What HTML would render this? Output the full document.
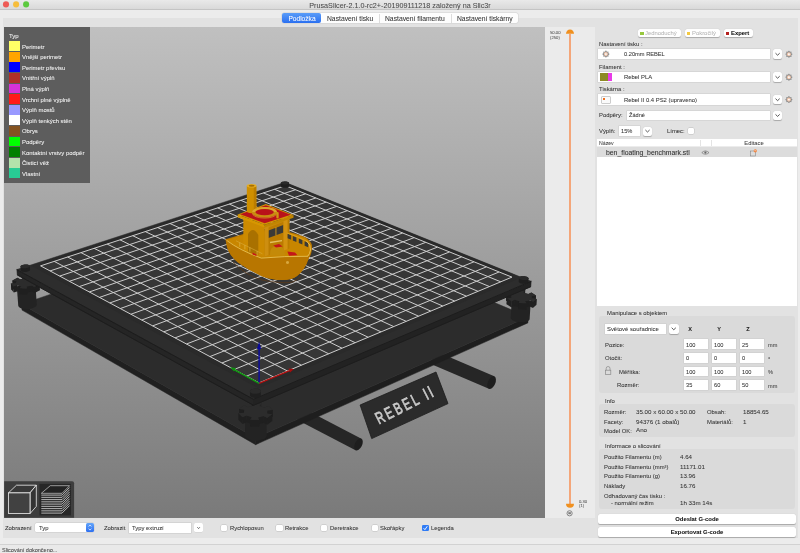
<!DOCTYPE html><html><head><meta charset="utf-8"><style>
html,body{margin:0;padding:0}
body{width:800px;height:553px;overflow:hidden;position:relative;background:#ececec;font-family:"Liberation Sans",sans-serif}
.t{position:absolute;line-height:1;white-space:nowrap;will-change:transform;-webkit-text-stroke:0.05px currentColor}
</style></head><body>
<div style="position:absolute;left:0.00px;top:0.00px;width:800.00px;height:9.10px;background:linear-gradient(#e9e9e9,#d9d9d9);border-bottom:0.5px solid #c4c4c4"></div>
<svg style="position:absolute;left:0;top:0" width="800" height="20"><circle cx="6.0" cy="4.4" r="3.05" fill="#ee5b55"/><circle cx="16.1" cy="4.4" r="3.05" fill="#f6bd3b"/><circle cx="26.1" cy="4.4" r="3.05" fill="#5cc93f"/></svg>
<div class="t" style="left:300.00px;width:200px;text-align:center;top:2.27px;font-size:7.2px;color:#4a4a4a;font-weight:normal;">PrusaSlicer-2.1.0-rc2+-201909111218 založený na Slic3r</div>
<div style="position:absolute;left:2.70px;top:18.40px;width:795.00px;height:520.10px;background:#e2e2e2"></div>
<div style="position:absolute;left:282.20px;top:13.30px;width:236.30px;height:9.90px;background:#fdfdfd;border-radius:2px;box-shadow:0 0 0 0.5px #cfcfcf"></div>
<div style="position:absolute;left:282.20px;top:13.30px;width:39.00px;height:9.90px;background:linear-gradient(#5a9cf8,#2a6ff0);border-radius:2px"></div>
<div style="position:absolute;left:379.00px;top:13.80px;width:0.50px;height:9.00px;background:#dcdcdc"></div>
<div style="position:absolute;left:451.00px;top:13.80px;width:0.50px;height:9.00px;background:#dcdcdc"></div>
<div class="t" style="left:202.30px;width:200px;text-align:center;top:15.90px;font-size:6.6px;color:#ffffff;font-weight:normal;">Podložka</div>
<div class="t" style="left:327.20px;top:15.82px;font-size:6.75px;color:#333;font-weight:normal;">Nastavení tisku</div>
<div class="t" style="left:385.00px;top:15.82px;font-size:6.75px;color:#333;font-weight:normal;">Nastavení filamentu</div>
<div class="t" style="left:457.00px;top:15.82px;font-size:6.75px;color:#333;font-weight:normal;">Nastavení tiskárny</div>
<div style="position:absolute;left:4.2px;top:27px;width:540.8px;height:491px;overflow:hidden;will-change:transform;background:linear-gradient(#c0c0c0,#7a7a7a)"><svg style="position:absolute;left:-4.2px;top:-27px" width="800" height="553" viewBox="0 0 800 553"><polygon points="430.32,363.75 488.92,388.85 494.28,376.35 435.68,351.25" fill="#262626"/>
<ellipse cx="491.60" cy="382.60" rx="3.74" ry="6.80" transform="rotate(23.2 491.60 382.60)" fill="#1e1e1e"/>
<polygon points="297.04,419.68 355.54,450.18 361.46,438.82 302.96,408.32" fill="#262626"/>
<ellipse cx="358.50" cy="444.50" rx="3.52" ry="6.40" transform="rotate(27.5 358.50 444.50)" fill="#1e1e1e"/>
<polygon points="255.62,444.67 22.02,310.11 21.57,304.18 255.54,437.96" fill="#202020" stroke="#202020" stroke-width="0.5" stroke-linejoin="round"/>
<polygon points="255.62,444.67 527.86,322.89 528.25,316.86 255.54,437.96" fill="#1e1e1e" stroke="#1e1e1e" stroke-width="0.5" stroke-linejoin="round"/>
<polygon points="255.54,437.96 528.25,316.86 285.07,214.28 21.57,304.18" fill="#2c2c2c" stroke="#2c2c2c" stroke-width="0.5" stroke-linejoin="round"/>
<polygon points="287.91,191.16 287.94,202.82 287.81,203.10 287.48,203.36 286.98,203.58 286.35,203.74 285.63,203.83 284.86,203.85 284.10,203.80 283.41,203.67 282.82,203.49 282.39,203.25 282.13,202.98 282.07,202.69 282.02,191.04 282.16,190.76 282.49,190.51 282.99,190.29 283.62,190.13 284.35,190.04 285.11,190.02 285.87,190.07 286.56,190.20 287.15,190.38 287.59,190.61 287.85,190.88" fill="#242424"/>
<polygon points="287.15,190.38 286.56,190.20 285.87,190.07 285.11,190.02 284.35,190.04 283.62,190.13 282.99,190.29 282.49,190.51 282.16,190.76 282.02,191.04 282.08,191.32 282.34,191.59 282.78,191.82 283.37,192.01 284.06,192.13 284.82,192.18 285.59,192.16 286.32,192.07 286.95,191.91 287.45,191.69 287.78,191.44 287.91,191.16 287.85,190.88 287.59,190.61" fill="#2a2a2a"/>
<polygon points="293.23,204.30 293.25,218.59 292.87,219.39 291.96,220.13 290.58,220.75 288.82,221.22 286.79,221.49 284.65,221.55 282.53,221.40 280.59,221.04 278.96,220.50 277.75,219.82 277.03,219.05 276.87,218.23 276.79,203.95 277.18,203.16 278.11,202.44 279.50,201.83 281.26,201.38 283.28,201.12 285.41,201.06 287.51,201.21 289.45,201.56 291.09,202.08 292.32,202.74 293.05,203.50" fill="#232323"/>
<polygon points="291.09,202.08 289.45,201.56 287.51,201.21 285.41,201.06 283.28,201.12 281.26,201.38 279.50,201.83 278.11,202.44 277.18,203.16 276.79,203.95 276.96,204.75 277.67,205.51 278.89,206.18 280.53,206.71 282.48,207.06 284.60,207.21 286.76,207.15 288.79,206.88 290.56,206.43 291.94,205.81 292.86,205.09 293.23,204.30 293.05,203.50 292.32,202.74" fill="#2b2b2b"/>
<polygon points="289.03,200.13 282.24,199.99 282.22,194.55 289.02,194.69" fill="#262626" />
<polygon points="282.24,199.99 283.10,201.48 283.08,196.03 282.22,194.55" fill="#1f1f1f" />
<polygon points="287.78,201.58 289.03,200.13 289.02,194.69 287.77,196.13" fill="#262626" />
<polygon points="278.91,202.27 276.18,201.13 276.15,195.68 278.89,196.82" fill="#262626" />
<polygon points="283.10,201.48 278.91,202.27 278.89,196.82 283.08,196.03" fill="#262626" />
<polygon points="294.76,201.52 291.74,202.54 291.73,197.09 294.76,196.07" fill="#262626" />
<polygon points="291.74,202.54 287.78,201.58 287.77,196.13 291.73,197.09" fill="#262626" />
<polygon points="276.18,201.13 272.45,203.26 272.41,197.80 276.15,195.68" fill="#262626" />
<polygon points="297.92,203.80 294.76,201.52 294.76,196.07 297.92,198.33" fill="#262626" />
<polygon points="272.45,203.26 276.35,203.74 276.32,198.28 272.41,197.80" fill="#1f1f1f" />
<polygon points="293.91,204.11 297.92,203.80 297.92,198.33 293.90,198.64" fill="#1f1f1f" />
<polygon points="276.35,203.74 276.10,205.50 276.07,200.03 276.32,198.28" fill="#1f1f1f" />
<polygon points="293.70,205.87 293.91,204.11 293.90,198.64 293.70,200.40" fill="#262626" />
<polygon points="276.10,205.50 272.06,205.81 272.03,200.34 276.07,200.03" fill="#262626" />
<polygon points="297.63,206.36 293.70,205.87 293.70,200.40 297.64,200.88" fill="#262626" />
<polygon points="272.06,205.81 275.16,208.12 275.13,202.63 272.03,200.34" fill="#1f1f1f" />
<polygon points="293.94,208.52 297.63,206.36 297.64,200.88 293.94,203.03" fill="#1f1f1f" />
<polygon points="278.24,207.08 282.21,208.06 282.19,202.57 278.21,201.60" fill="#1f1f1f" />
<polygon points="275.16,208.12 278.24,207.08 278.21,201.60 275.13,202.63" fill="#1f1f1f" />
<polygon points="286.94,208.16 291.15,207.36 291.15,201.87 286.93,202.67" fill="#1f1f1f" />
<polygon points="291.15,207.36 293.94,208.52 293.94,203.03 291.15,201.87" fill="#1f1f1f" />
<polygon points="282.21,208.06 280.94,209.54 280.92,204.04 282.19,202.57" fill="#1f1f1f" />
<polygon points="287.82,209.69 286.94,208.16 286.93,202.67 287.81,204.19" fill="#262626" />
<polygon points="280.94,209.54 287.82,209.69 287.81,204.19 280.92,204.04" fill="#1f1f1f" />
<polygon points="289.02,194.69 282.22,194.55 283.08,196.03 278.89,196.82 276.15,195.68 272.41,197.80 276.32,198.28 276.07,200.03 272.03,200.34 275.13,202.63 278.21,201.60 282.19,202.57 280.92,204.04 287.81,204.19 286.93,202.67 291.15,201.87 293.94,203.03 297.64,200.88 293.70,200.40 293.90,198.64 297.92,198.33 294.76,196.07 291.73,197.09 287.77,196.13" fill="#2c2c2c" />
<polygon points="22.96,288.18 22.00,275.37 22.05,275.02 22.33,274.67 22.81,274.34 23.46,274.07 24.24,273.87 25.10,273.76 25.96,273.73 26.79,273.80 27.52,273.95 28.09,274.19 28.48,274.48 28.66,274.82 29.60,287.62 29.55,287.98 29.27,288.34 28.79,288.67 28.14,288.94 27.36,289.15 26.51,289.27 25.64,289.29 24.82,289.22 24.09,289.06 23.52,288.83 23.13,288.53" fill="#242424"/>
<polygon points="28.09,274.19 27.52,273.95 26.79,273.80 25.96,273.73 25.10,273.76 24.24,273.87 23.46,274.07 22.81,274.34 22.33,274.67 22.05,275.02 22.00,275.37 22.17,275.71 22.56,276.01 23.13,276.24 23.86,276.40 24.69,276.47 25.56,276.44 26.42,276.32 27.20,276.12 27.85,275.85 28.33,275.53 28.61,275.18 28.66,274.82 28.48,274.48" fill="#2a2a2a"/>
<polygon points="18.29,305.89 16.95,288.39 17.11,287.37 17.89,286.38 19.24,285.47 21.06,284.71 23.23,284.14 25.61,283.81 28.02,283.74 30.32,283.93 32.34,284.37 33.95,285.03 35.05,285.86 35.54,286.82 36.79,304.29 36.66,305.32 35.91,306.34 34.58,307.27 32.77,308.06 30.60,308.64 28.21,308.98 25.78,309.06 23.48,308.86 21.45,308.41 19.84,307.73 18.77,306.87" fill="#232323"/>
<polygon points="33.95,285.03 32.34,284.37 30.32,283.93 28.02,283.74 25.61,283.81 23.23,284.14 21.06,284.71 19.24,285.47 17.89,286.38 17.11,287.37 16.95,288.39 17.43,289.35 18.51,290.20 20.12,290.87 22.15,291.31 24.47,291.51 26.91,291.43 29.31,291.09 31.49,290.52 33.31,289.75 34.65,288.83 35.41,287.83 35.54,286.82 35.05,285.86" fill="#2b2b2b"/>
<polygon points="32.82,282.46 25.27,282.27 24.83,276.30 32.39,276.48" fill="#262626" />
<polygon points="25.27,282.27 25.59,284.15 25.15,278.17 24.83,276.30" fill="#1f1f1f" />
<polygon points="30.81,284.28 32.82,282.46 32.39,276.48 30.37,278.30" fill="#262626" />
<polygon points="20.56,285.15 17.99,283.71 17.53,277.72 20.11,279.15" fill="#262626" />
<polygon points="25.59,284.15 20.56,285.15 20.11,279.15 25.15,278.17" fill="#262626" />
<polygon points="38.66,284.22 34.83,285.50 34.40,279.50 38.23,278.23" fill="#262626" />
<polygon points="34.83,285.50 30.81,284.28 30.37,278.30 34.40,279.50" fill="#262626" />
<polygon points="17.99,283.71 12.89,286.39 12.42,280.39 17.53,277.72" fill="#262626" />
<polygon points="41.23,287.09 38.66,284.22 38.23,278.23 40.80,281.09" fill="#262626" />
<polygon points="12.89,286.39 17.06,287.00 16.59,280.99 12.42,280.39" fill="#1f1f1f" />
<polygon points="36.59,287.48 41.23,287.09 40.80,281.09 36.16,281.47" fill="#1f1f1f" />
<polygon points="17.06,287.00 16.01,289.22 15.55,283.21 16.59,280.99" fill="#1f1f1f" />
<polygon points="35.60,289.71 36.59,287.48 36.16,281.47 35.17,283.69" fill="#262626" />
<polygon points="16.01,289.22 11.35,289.62 10.88,283.60 15.55,283.21" fill="#262626" />
<polygon points="39.81,290.33 35.60,289.71 35.17,283.69 39.38,284.30" fill="#262626" />
<polygon points="11.35,289.62 13.83,292.53 13.36,286.49 10.88,283.60" fill="#1f1f1f" />
<polygon points="34.74,293.06 39.81,290.33 39.38,284.30 34.31,287.01" fill="#1f1f1f" />
<polygon points="17.73,291.23 21.77,292.47 21.31,286.43 17.27,285.20" fill="#1f1f1f" />
<polygon points="13.83,292.53 17.73,291.23 17.27,285.20 13.36,286.49" fill="#1f1f1f" />
<polygon points="27.04,292.60 32.11,291.59 31.67,285.55 26.59,286.56" fill="#1f1f1f" />
<polygon points="32.11,291.59 34.74,293.06 34.31,287.01 31.67,285.55" fill="#1f1f1f" />
<polygon points="21.77,292.47 19.70,294.34 19.24,288.29 21.31,286.43" fill="#1f1f1f" />
<polygon points="27.37,294.53 27.04,292.60 26.59,286.56 26.92,288.48" fill="#262626" />
<polygon points="19.70,294.34 27.37,294.53 26.92,288.48 19.24,288.29" fill="#1f1f1f" />
<polygon points="32.39,276.48 24.83,276.30 25.15,278.17 20.11,279.15 17.53,277.72 12.42,280.39 16.59,280.99 15.55,283.21 10.88,283.60 13.36,286.49 17.27,285.20 21.31,286.43 19.24,288.29 26.92,288.48 26.59,286.56 31.67,285.55 34.31,287.01 39.38,284.30 35.17,283.69 36.16,281.47 40.80,281.09 38.23,278.23 34.40,279.50 30.37,278.30" fill="#2c2c2c" />
<polygon points="517.85,300.63 518.64,287.61 518.69,287.24 518.96,286.91 519.45,286.63 520.11,286.42 520.91,286.30 521.78,286.27 522.67,286.34 523.52,286.50 524.27,286.75 524.87,287.05 525.28,287.40 525.47,287.77 524.65,300.80 524.61,301.17 524.34,301.51 523.85,301.80 523.19,302.01 522.40,302.13 521.53,302.16 520.63,302.09 519.79,301.92 519.04,301.68 518.44,301.36 518.03,301.01" fill="#242424"/>
<polygon points="524.27,286.75 523.52,286.50 522.67,286.34 521.78,286.27 520.91,286.30 520.11,286.42 519.45,286.63 518.96,286.91 518.69,287.24 518.64,287.61 518.83,287.98 519.24,288.33 519.84,288.64 520.59,288.88 521.44,289.04 522.34,289.11 523.21,289.09 524.01,288.96 524.67,288.76 525.16,288.47 525.43,288.14 525.47,287.77 525.28,287.40 524.87,287.05" fill="#2a2a2a"/>
<polygon points="510.69,317.95 511.64,302.01 511.78,300.97 512.55,300.03 513.91,299.23 515.75,298.64 517.97,298.30 520.39,298.23 522.87,298.42 525.23,298.88 527.32,299.57 529.00,300.43 530.14,301.43 530.68,302.48 529.65,318.44 529.54,319.49 528.78,320.46 527.44,321.28 525.59,321.89 523.37,322.24 520.93,322.32 518.44,322.11 516.07,321.64 513.98,320.93 512.32,320.04 511.20,319.02" fill="#232323"/>
<polygon points="527.32,299.57 525.23,298.88 522.87,298.42 520.39,298.23 517.97,298.30 515.75,298.64 513.91,299.23 512.55,300.03 511.78,300.97 511.64,302.01 512.15,303.06 513.28,304.06 514.95,304.94 517.04,305.64 519.43,306.10 521.93,306.30 524.38,306.23 526.61,305.88 528.46,305.28 529.81,304.47 530.57,303.52 530.68,302.48 530.14,301.43 529.00,300.43" fill="#2b2b2b"/>
<polygon points="523.85,296.88 516.00,296.69 516.36,290.61 524.23,290.81" fill="#262626" />
<polygon points="516.00,296.69 517.58,298.64 517.95,292.56 516.36,290.61" fill="#1f1f1f" />
<polygon points="523.00,298.78 523.85,296.88 524.23,290.81 523.38,292.69" fill="#262626" />
<polygon points="513.09,299.67 509.49,298.17 509.85,292.09 513.45,293.58" fill="#262626" />
<polygon points="517.58,298.64 513.09,299.67 513.45,293.58 517.95,292.56" fill="#262626" />
<polygon points="531.00,298.71 527.93,300.04 528.32,293.95 531.39,292.62" fill="#262626" />
<polygon points="527.93,300.04 523.00,298.78 523.38,292.69 528.32,293.95" fill="#262626" />
<polygon points="509.49,298.17 506.05,300.96 506.41,294.86 509.85,292.09" fill="#262626" />
<polygon points="535.54,301.70 531.00,298.71 531.39,292.62 535.95,295.59" fill="#262626" />
<polygon points="506.05,300.96 510.73,301.60 511.09,295.49 506.41,294.86" fill="#1f1f1f" />
<polygon points="531.06,302.10 535.54,301.70 535.95,295.59 531.45,296.00" fill="#1f1f1f" />
<polygon points="510.73,301.60 511.14,303.91 511.50,297.79 511.09,295.49" fill="#1f1f1f" />
<polygon points="531.53,304.42 531.06,302.10 531.45,296.00 531.93,298.30" fill="#262626" />
<polygon points="511.14,303.91 506.63,304.32 506.98,298.20 511.50,297.79" fill="#262626" />
<polygon points="536.25,305.06 531.53,304.42 531.93,298.30 536.65,298.94" fill="#262626" />
<polygon points="506.63,304.32 511.11,307.35 511.47,301.22 506.98,298.20" fill="#1f1f1f" />
<polygon points="532.87,307.90 536.25,305.06 536.65,298.94 533.28,301.76" fill="#1f1f1f" />
<polygon points="514.23,306.00 519.19,307.28 519.57,301.15 514.60,299.87" fill="#1f1f1f" />
<polygon points="511.11,307.35 514.23,306.00 514.60,299.87 511.47,301.22" fill="#1f1f1f" />
<polygon points="524.68,307.42 529.20,306.37 529.59,300.24 525.07,301.28" fill="#1f1f1f" />
<polygon points="529.20,306.37 532.87,307.90 533.28,301.76 529.59,300.24" fill="#1f1f1f" />
<polygon points="519.19,307.28 518.32,309.23 518.70,303.08 519.57,301.15" fill="#1f1f1f" />
<polygon points="526.30,309.43 524.68,307.42 525.07,301.28 526.69,303.28" fill="#262626" />
<polygon points="518.32,309.23 526.30,309.43 526.69,303.28 518.70,303.08" fill="#1f1f1f" />
<polygon points="524.23,290.81 516.36,290.61 517.95,292.56 513.45,293.58 509.85,292.09 506.41,294.86 511.09,295.49 511.50,297.79 506.98,298.20 511.47,301.22 514.60,299.87 519.57,301.15 518.70,303.08 526.69,303.28 525.07,301.28 529.59,300.24 533.28,301.76 536.65,298.94 531.93,298.30 531.45,296.00 535.95,295.59 531.39,292.62 528.32,293.95 523.38,292.69" fill="#2c2c2c" />
<polygon points="259.38,401.47 259.53,415.95 259.34,416.43 258.89,416.88 258.23,417.26 257.38,417.54 256.43,417.70 255.42,417.73 254.43,417.64 253.52,417.42 252.76,417.09 252.20,416.68 251.88,416.21 251.81,415.72 251.63,401.25 251.83,400.77 252.28,400.33 252.94,399.96 253.79,399.68 254.74,399.52 255.75,399.49 256.75,399.58 257.65,399.80 258.42,400.12 258.98,400.52 259.31,400.98" fill="#242424"/>
<polygon points="258.42,400.12 257.65,399.80 256.75,399.58 255.75,399.49 254.74,399.52 253.79,399.68 252.94,399.96 252.28,400.33 251.83,400.77 251.63,401.25 251.69,401.74 252.02,402.20 252.58,402.61 253.34,402.93 254.25,403.14 255.25,403.24 256.26,403.20 257.22,403.04 258.07,402.77 258.74,402.40 259.18,401.95 259.38,401.47 259.31,400.98 258.98,400.52" fill="#2a2a2a"/>
<polygon points="266.50,417.85 266.65,435.55 266.12,436.94 264.88,438.22 263.03,439.29 260.69,440.09 258.01,440.55 255.19,440.65 252.42,440.38 249.89,439.76 247.77,438.82 246.21,437.64 245.32,436.30 245.15,434.89 244.89,417.20 245.46,415.84 246.72,414.60 248.58,413.55 250.92,412.78 253.59,412.34 256.39,412.24 259.15,412.50 261.67,413.10 263.79,414.01 265.37,415.15 266.29,416.46" fill="#232323"/>
<polygon points="263.79,414.01 261.67,413.10 259.15,412.50 256.39,412.24 253.59,412.34 250.92,412.78 248.58,413.55 246.72,414.60 245.46,415.84 244.89,417.20 245.06,418.59 245.96,419.91 247.52,421.07 249.65,421.99 252.19,422.61 254.98,422.88 257.82,422.78 260.51,422.32 262.86,421.53 264.72,420.48 265.96,419.22 266.50,417.85 266.29,416.46 265.37,415.15" fill="#2b2b2b"/>
<polygon points="261.24,410.32 252.33,410.05 252.25,403.32 261.17,403.58" fill="#262626" />
<polygon points="252.33,410.05 253.37,412.63 253.29,405.87 252.25,403.32" fill="#1f1f1f" />
<polygon points="259.52,412.81 261.24,410.32 261.17,403.58 259.45,406.05" fill="#262626" />
<polygon points="247.84,413.98 244.31,412.00 244.21,405.25 247.74,407.22" fill="#262626" />
<polygon points="253.37,412.63 247.84,413.98 247.74,407.22 253.29,405.87" fill="#262626" />
<polygon points="268.69,412.73 264.67,414.48 264.61,407.71 268.64,405.97" fill="#262626" />
<polygon points="264.67,414.48 259.52,412.81 259.45,406.05 264.61,407.71" fill="#262626" />
<polygon points="244.31,412.00 239.28,415.67 239.17,408.90 244.21,405.25" fill="#262626" />
<polygon points="272.73,416.66 268.69,412.73 268.64,405.97 272.68,409.89" fill="#262626" />
<polygon points="239.28,415.67 244.38,416.51 244.28,409.73 239.17,408.90" fill="#1f1f1f" />
<polygon points="267.44,417.19 272.73,416.66 272.68,409.89 267.38,410.41" fill="#1f1f1f" />
<polygon points="244.38,416.51 243.93,419.55 243.83,412.76 244.28,409.73" fill="#1f1f1f" />
<polygon points="267.07,420.25 267.44,417.19 267.38,410.41 267.01,413.45" fill="#262626" />
<polygon points="243.93,419.55 238.61,420.09 238.50,413.29 243.83,412.76" fill="#262626" />
<polygon points="272.22,421.10 267.07,420.25 267.01,413.45 272.18,414.29" fill="#262626" />
<polygon points="238.61,420.09 242.54,424.09 242.44,417.27 238.50,413.29" fill="#1f1f1f" />
<polygon points="267.26,424.84 272.22,421.10 272.18,414.29 267.20,418.01" fill="#1f1f1f" />
<polygon points="246.65,422.30 251.83,424.01 251.74,417.19 246.56,415.50" fill="#1f1f1f" />
<polygon points="242.54,424.09 246.65,422.30 246.56,415.50 242.44,417.27" fill="#1f1f1f" />
<polygon points="258.06,424.20 263.64,422.82 263.58,416.00 257.98,417.38" fill="#1f1f1f" />
<polygon points="263.64,422.82 267.26,424.84 267.20,418.01 263.58,416.00" fill="#1f1f1f" />
<polygon points="251.83,424.01 250.06,426.58 249.97,419.75 251.74,417.19" fill="#1f1f1f" />
<polygon points="259.13,426.85 258.06,424.20 257.98,417.38 259.06,420.02" fill="#262626" />
<polygon points="250.06,426.58 259.13,426.85 259.06,420.02 249.97,419.75" fill="#1f1f1f" />
<polygon points="261.17,403.58 252.25,403.32 253.29,405.87 247.74,407.22 244.21,405.25 239.17,408.90 244.28,409.73 243.83,412.76 238.50,413.29 242.44,417.27 246.56,415.50 251.74,417.19 249.97,419.75 259.06,420.02 257.98,417.38 263.58,416.00 267.20,418.01 272.18,414.29 267.01,413.45 267.38,410.41 272.68,409.89 268.64,405.97 264.61,407.71 259.45,406.05" fill="#2c2c2c" />
<polygon points="253.59,405.31 17.22,274.90 16.81,269.60 253.51,399.30" fill="#252525" stroke="#252525" stroke-width="0.5" stroke-linejoin="round"/>
<polygon points="253.59,405.31 530.85,286.66 531.20,281.27 253.51,399.30" fill="#222222" stroke="#222222" stroke-width="0.5" stroke-linejoin="round"/>
<polygon points="253.51,399.30 531.20,281.27 284.97,182.31 16.81,269.60" fill="#2d2d2d" stroke="#2d2d2d" stroke-width="0.5" stroke-linejoin="round"/>
<path d="M16.81,269.60 L253.51,399.30 L531.20,281.27" fill="none" stroke="#1b1b1b" stroke-width="0.9" stroke-linejoin="round"/>
<path d="M17.22,274.90 L253.59,405.31 L530.85,286.66" fill="none" stroke="#1d1d1d" stroke-width="1.0" stroke-linejoin="round"/>
<polygon points="258.41,388.22 521.53,277.52 285.90,182.80 31.33,265.78" fill="#2a2a2a" />
<polygon points="259.09,382.89 511.93,277.14 285.50,185.69 40.57,265.85" fill="#363636" />
<path d="M259.09,382.89L40.57,265.85M259.09,382.89L511.93,277.14M273.39,376.91L54.20,261.39M246.51,376.15L499.10,271.96M287.50,371.01L67.67,256.98M234.13,369.52L486.45,266.85M301.41,365.19L80.98,252.62M221.94,362.99L473.97,261.81M315.13,359.45L94.14,248.32M209.94,356.57L461.67,256.84M328.67,353.79L107.14,244.06M198.13,350.24L449.53,251.94M342.03,348.20L119.99,239.85M186.50,344.01L437.56,247.10M355.21,342.69L132.70,235.70M175.05,337.87L425.75,242.33M368.22,337.25L145.26,231.58M163.76,331.83L414.10,237.63M381.05,331.88L157.67,227.52M152.65,325.88L402.60,232.98M393.72,326.58L169.95,223.50M141.70,320.02L391.25,228.40M406.23,321.35L182.09,219.53M130.92,314.24L380.05,223.88M418.58,316.18L194.09,215.60M120.29,308.55L369.00,219.41M430.77,311.09L205.96,211.72M109.82,302.94L358.09,215.01M442.80,306.05L217.70,207.88M99.50,297.41L347.32,210.66M454.68,301.08L229.31,204.08M89.32,291.96L336.69,206.36M466.42,296.17L240.79,200.32M79.29,286.59L326.19,202.12M478.01,291.33L252.15,196.60M69.41,281.29L315.83,197.94M489.45,286.54L263.39,192.92M59.66,276.07L305.59,193.80M500.76,281.81L274.50,189.29M50.05,270.92L295.48,189.72M511.93,277.14L285.50,185.69M40.57,265.85L285.50,185.69" stroke="#cdcdcd" stroke-width="1.0" fill="none"/>
<polygon points="280.82,186.19 280.81,182.88 281.01,182.50 281.47,182.15 282.17,181.85 283.06,181.63 284.07,181.50 285.14,181.47 286.21,181.54 287.18,181.71 288.00,181.97 288.62,182.29 288.99,182.66 289.08,183.05 289.08,186.36 288.89,186.75 288.43,187.11 287.74,187.40 286.85,187.63 285.83,187.76 284.75,187.79 283.69,187.71 282.71,187.54 281.88,187.28 281.27,186.96 280.91,186.59" fill="#1f1f1f"/>
<polygon points="288.00,181.97 287.18,181.71 286.21,181.54 285.14,181.47 284.07,181.50 283.06,181.63 282.17,181.85 281.47,182.15 281.01,182.50 280.81,182.88 280.90,183.27 281.26,183.64 281.87,183.97 282.70,184.22 283.67,184.39 284.74,184.47 285.82,184.44 286.84,184.31 287.73,184.09 288.43,183.79 288.89,183.44 289.08,183.05 288.99,182.66 288.62,182.29" fill="#2a2a2a"/>
<polygon points="29.81,266.02 30.07,269.67 30.00,270.16 29.62,270.65 28.94,271.10 28.03,271.48 26.93,271.76 25.73,271.93 24.51,271.96 23.34,271.87 22.32,271.65 21.51,271.32 20.97,270.91 20.73,270.44 20.45,266.79 20.53,266.30 20.92,265.81 21.60,265.36 22.52,264.99 23.61,264.71 24.81,264.55 26.03,264.51 27.18,264.61 28.20,264.82 29.01,265.15 29.56,265.56" fill="#1f1f1f"/>
<polygon points="29.01,265.15 28.20,264.82 27.18,264.61 26.03,264.51 24.81,264.55 23.61,264.71 22.52,264.99 21.60,265.36 20.92,265.81 20.53,266.30 20.45,266.79 20.69,267.26 21.24,267.68 22.05,268.00 23.07,268.22 24.23,268.31 25.46,268.28 26.66,268.11 27.76,267.83 28.68,267.46 29.35,267.01 29.74,266.52 29.81,266.02 29.56,265.56" fill="#2a2a2a"/>
<polygon points="520.39,283.15 519.55,282.72 518.98,282.23 518.72,281.71 518.94,278.01 519.01,277.51 519.39,277.04 520.07,276.66 521.00,276.37 522.12,276.20 523.34,276.16 524.59,276.26 525.78,276.48 526.83,276.82 527.68,277.24 528.25,277.73 528.52,278.24 528.29,281.94 528.23,282.45 527.85,282.92 527.17,283.31 526.24,283.60 525.12,283.77 523.89,283.81 522.64,283.71 521.44,283.49" fill="#1f1f1f"/>
<polygon points="526.83,276.82 525.78,276.48 524.59,276.26 523.34,276.16 522.12,276.20 521.00,276.37 520.07,276.66 519.39,277.04 519.01,277.51 518.94,278.01 519.20,278.52 519.78,279.01 520.62,279.44 521.67,279.78 522.87,280.00 524.13,280.10 525.35,280.06 526.47,279.89 527.40,279.60 528.08,279.21 528.46,278.75 528.52,278.24 528.25,277.73 527.68,277.24" fill="#2a2a2a"/>
<polygon points="250.00,395.21 249.94,391.09 250.23,390.42 250.86,389.81 251.80,389.30 252.98,388.92 254.32,388.70 255.74,388.65 257.13,388.78 258.41,389.08 259.48,389.52 260.27,390.08 260.73,390.72 260.83,391.40 260.87,395.52 260.59,396.19 259.97,396.81 259.03,397.33 257.85,397.71 256.50,397.94 255.08,397.98 253.68,397.85 252.40,397.55 251.33,397.10 250.54,396.54 250.09,395.89" fill="#1f1f1f"/>
<polygon points="259.48,389.52 258.41,389.08 257.13,388.78 255.74,388.65 254.32,388.70 252.98,388.92 251.80,389.30 250.86,389.81 250.23,390.42 249.94,391.09 250.03,391.77 250.49,392.41 251.28,392.98 252.35,393.42 253.63,393.72 255.03,393.85 256.45,393.80 257.80,393.58 258.99,393.20 259.93,392.68 260.55,392.07 260.83,391.40 260.73,390.72 260.27,390.08" fill="#2a2a2a"/>
<path d="M259.1,383.4 L259.1,347" stroke="#0a0aa0" stroke-width="1.4"/><polygon points="257.0,349 259.1,341.5 261.2,349" fill="#0a0a9a"/>
<path d="M259.1,383.4 L289.5,370.7" stroke="#b00e0e" stroke-width="1.4"/><polygon points="288.5,368.6 293.9,368.9 290.0,372.6" fill="#a80d0d"/>
<path d="M259.1,383.4 L234.5,369.8" stroke="#0c960c" stroke-width="1.4"/><polygon points="230.1,367.3 235.9,367.9 234.0,371.6" fill="#0c8f0c"/>
<polygon points="360.1,405 436,372 448,403.6 371.7,438.6" fill="#2b2b2b" stroke="#1c1c1c" stroke-width="0.8"/>
<text x="0" y="0" transform="translate(379,424.5) rotate(-27) scale(0.8,1.2)" font-family="Liberation Sans" font-size="14" letter-spacing="3.0" fill="#c8c8c8" stroke="#c8c8c8" stroke-width="0.7">REBEL II</text>
<path d="M233,262 Q245,275 262,280 Q280,283.8 292,282.2 Q298,280.5 300.5,276" fill="none" stroke="#5e3a17" stroke-width="0.7" fill="none"/>
<path d="M225.4,239.2 L245,233.5 L272.5,229.4 Q292,231 305,237 Q311,241 311.9,245 Q312.5,253 309,258 Q305,270 297,276 Q292,280 282,280 Q272,280 262.1,276.2 Q249,270.5 238,262.5 Q229,255 226.8,246.3 Z" fill="#b87600" />
<path d="M226.5,240 L245,234.4 L272.5,230.2 Q292,232 305,238 Q310.5,242 311,246 Q310.5,252 308.5,256.3 Q285,256 261.3,258.1 Q240,250 226.5,240 Z" fill="#c88600" />
<polygon points="243.3,217 264.7,226 264.7,256.5 243.3,250.5" fill="#cc8a00" />
<path d="M248,252 L248,234 Q253,225.5 258.3,235 L258.3,255 Z" fill="#a97100" />
<polygon points="264.7,226 289.5,216.5 289.5,248.5 264.7,256.5" fill="#bb7c00" />
<polygon points="268.5,230.5 283.4,225 283.4,232.5 268.5,238" fill="#3b3a36" />
<rect x="275.5" y="227" width="0.9" height="8.5" fill="#d69a18"/>
<polygon points="264.7,226 289.5,216.5 289.5,219.5 264.7,229" fill="#c8890a" />
<polygon points="283.4,217.3 287.6,216.6 287.6,249.2 283.4,250.8" fill="#d39210" />
<polygon points="264.7,226 268.5,224.6 268.5,255.3 264.7,256.5" fill="#cd8e10" />
<polygon points="287.4,251.5 295,252.5 297.4,255.2 289,255.7" fill="#c41619" />
<path d="M270,255.5 Q269,246.5 277.5,245.8 Q285.5,246.5 285,255.5 Z" fill="#c48a08" />
<polygon points="273.3,245.5 279,244 282.7,246.6 276,247.6" fill="#c41619" />
<path d="M270,242.5 L282,240.6" fill="none" stroke="#e3c060" stroke-width="1.3"/>
<polygon points="287.6,233.8 291.20000000000005,235.3 291.20000000000005,239.8 287.6,238.3" fill="#3b3a36" />
<polygon points="292.8,236.0 296.40000000000003,237.5 296.40000000000003,242.0 292.8,240.5" fill="#3b3a36" />
<polygon points="298.8,238.6 302.40000000000003,240.1 302.40000000000003,244.6 298.8,243.1" fill="#3b3a36" />
<polygon points="304.6,241.2 308.20000000000005,242.7 308.20000000000005,247.2 304.6,245.7" fill="#3b3a36" />
<path d="M287,233 Q298,236.5 307.5,241.6" fill="none" stroke="#e3ac2a" stroke-width="0.7" fill="none"/>
<path d="M306.5,241 Q311,244.5 310.5,250 Q310,254 307.5,256.5" fill="none" stroke="#e9c45a" stroke-width="0.9" fill="none"/>
<path d="M226.5,240.3 Q240,250.5 261.3,258.1 Q285,256 308.7,256.3 Q305,270 297,276 Q292,280 282,280 Q272,280 262.1,276.2 Q249,270.5 238,262.5 Q229,255 226.8,246.3 Z" fill="#b87600" />
<circle cx="287.5" cy="262.5" r="1.3" fill="#d8a840"/>
<path d="M226.5,240.3 Q240,250.5 261.3,258.1 Q285,256 308,256.3" fill="none" stroke="#e8c456" stroke-width="0.85" fill="none"/>
<path d="M236,240.8 L262.5,253.8" fill="none" stroke="#d9aa38" stroke-width="0.6" fill="none"/>
<rect x="239.4" y="242.5" width="0.8" height="4.3" fill="#dcae3c"/>
<rect x="244.5" y="245.0" width="0.8" height="4.3" fill="#dcae3c"/>
<rect x="249.5" y="247.4" width="0.8" height="4.3" fill="#dcae3c"/>
<rect x="256.7" y="250.9" width="0.8" height="4.3" fill="#dcae3c"/>
<polygon points="252.5,252.6 256.5,254.4 256.5,256 252.5,254.5" fill="#c41619" />
<polygon points="237.6,214.4 264.7,224.7 264.7,227.6 237.6,217.3" fill="#d69600" />
<polygon points="264.7,224.7 293.5,214.9 293.5,217.8 264.7,227.6" fill="#c08500" />
<polygon points="237.6,214.4 265.8,204.1 293.5,214.9 264.7,224.7" fill="#d49400" />
<polygon points="240.2,214.3 265.8,205.3 290.8,214.8 264.7,223.2" fill="#b9121a" />
<path d="M246.8,186 L246.8,212 Q251.5,214.5 256.5,212 L256.3,186 Z" fill="#cf8f00" />
<rect x="253.8" y="186.5" width="2.5" height="25.5" fill="#bb7d00"/>
<ellipse cx="251.6" cy="185.8" rx="4.9" ry="1.8" fill="#e6ae22"/>
<ellipse cx="251.6" cy="185.8" rx="3" ry="1" fill="#a86f00"/>
<ellipse cx="264.5" cy="212.2" rx="12.6" ry="5.2" fill="#c98c10"/>
<path d="M252.2,212 A12.3,4.9 0 0 1 276.8,212 L273.6,212.1 A9.1,3.1 0 0 0 255.4,212.1 Z" fill="#dca62c"/>
<ellipse cx="264.6" cy="212.1" rx="9.2" ry="3.1" fill="#b9121a"/>
<path d="M252.5,213.5 A12,4.6 0 0 0 276.5,213.5" fill="none" stroke="#e0aa30" stroke-width="0.6"/>
<rect x="276.3" y="212" width="2.4" height="6.5" rx="1.1" fill="#d09410"/>
<circle cx="287.5" cy="262.5" r="1.3" fill="#d8a840"/></svg></div>
<div style="position:absolute;left:4.30px;top:26.80px;width:85.40px;height:156.60px;background:#5d5d5d"></div>
<div class="t" style="left:9.40px;top:32.64px;font-size:6.0px;color:#f2f2f2;font-weight:normal;">Typ</div>
<div style="position:absolute;left:9.40px;top:41.20px;width:10.40px;height:9.90px;background:#ffff66"></div>
<div class="t" style="left:22.00px;top:44.57px;font-size:5.95px;color:#f4f4f4;font-weight:normal;">Perimetr</div>
<div style="position:absolute;left:9.40px;top:51.80px;width:10.40px;height:9.90px;background:#ffa500"></div>
<div class="t" style="left:22.00px;top:55.17px;font-size:5.95px;color:#f4f4f4;font-weight:normal;">Vnější perimetr</div>
<div style="position:absolute;left:9.40px;top:62.40px;width:10.40px;height:9.90px;background:#0000ff"></div>
<div class="t" style="left:22.00px;top:65.77px;font-size:5.95px;color:#f4f4f4;font-weight:normal;">Perimetr převisu</div>
<div style="position:absolute;left:9.40px;top:73.00px;width:10.40px;height:9.90px;background:#b03029"></div>
<div class="t" style="left:22.00px;top:76.37px;font-size:5.95px;color:#f4f4f4;font-weight:normal;">Vnitřní výplň</div>
<div style="position:absolute;left:9.40px;top:83.60px;width:10.40px;height:9.90px;background:#d732d7"></div>
<div class="t" style="left:22.00px;top:86.97px;font-size:5.95px;color:#f4f4f4;font-weight:normal;">Plná výplň</div>
<div style="position:absolute;left:9.40px;top:94.20px;width:10.40px;height:9.90px;background:#ff1a1a"></div>
<div class="t" style="left:22.00px;top:97.57px;font-size:5.95px;color:#f4f4f4;font-weight:normal;">Vrchní plné výplně</div>
<div style="position:absolute;left:9.40px;top:104.80px;width:10.40px;height:9.90px;background:#9999ff"></div>
<div class="t" style="left:22.00px;top:108.17px;font-size:5.95px;color:#f4f4f4;font-weight:normal;">Výplň mostů</div>
<div style="position:absolute;left:9.40px;top:115.40px;width:10.40px;height:9.90px;background:#ffffff"></div>
<div class="t" style="left:22.00px;top:118.77px;font-size:5.95px;color:#f4f4f4;font-weight:normal;">Výplň tenkých stěn</div>
<div style="position:absolute;left:9.40px;top:126.00px;width:10.40px;height:9.90px;background:#845321"></div>
<div class="t" style="left:22.00px;top:129.37px;font-size:5.95px;color:#f4f4f4;font-weight:normal;">Obrys</div>
<div style="position:absolute;left:9.40px;top:136.60px;width:10.40px;height:9.90px;background:#00ff00"></div>
<div class="t" style="left:22.00px;top:139.97px;font-size:5.95px;color:#f4f4f4;font-weight:normal;">Podpěry</div>
<div style="position:absolute;left:9.40px;top:147.20px;width:10.40px;height:9.90px;background:#008000"></div>
<div class="t" style="left:22.00px;top:150.57px;font-size:5.95px;color:#f4f4f4;font-weight:normal;">Kontaktní vrstvy podpěr</div>
<div style="position:absolute;left:9.40px;top:157.80px;width:10.40px;height:9.90px;background:#b3e3ab"></div>
<div class="t" style="left:22.00px;top:161.17px;font-size:5.95px;color:#f4f4f4;font-weight:normal;">Čisticí věž</div>
<div style="position:absolute;left:9.40px;top:168.40px;width:10.40px;height:9.90px;background:#28cc94"></div>
<div class="t" style="left:22.00px;top:171.77px;font-size:5.95px;color:#f4f4f4;font-weight:normal;">Vlastní</div>
<svg style="position:absolute;left:0;top:0" width="800" height="553"><path d="M4.2,481.2 H72.1 Q74.1,481.2 74.1,483.2 V517.7 H4.2 Z" fill="#3d3d3d"/><polygon points="8.4,492.9 16.5,485.2 36.3,485.2 30,492.9" fill="#383838" stroke="#f0f0f0" stroke-width="0.8"/><polygon points="30,492.9 36.3,485.2 36.3,506.4 30,513.6" fill="#333" stroke="#f0f0f0" stroke-width="0.8"/><rect x="8.4" y="492.9" width="21.6" height="20.7" fill="#414141" stroke="#f0f0f0" stroke-width="0.8"/><rect x="39.5" y="483.9" width="31.5" height="31.5" fill="#272727"/><path d="M41.3,495.10 H62 L69.6,487.50" fill="none" stroke="#cfcfcf" stroke-width="0.85"/><path d="M41.3,497.35 H62 L69.6,489.75" fill="none" stroke="#cfcfcf" stroke-width="0.85"/><path d="M41.3,499.60 H62 L69.6,492.00" fill="none" stroke="#cfcfcf" stroke-width="0.85"/><path d="M41.3,501.85 H62 L69.6,494.25" fill="none" stroke="#cfcfcf" stroke-width="0.85"/><path d="M41.3,504.10 H62 L69.6,496.50" fill="none" stroke="#cfcfcf" stroke-width="0.85"/><path d="M41.3,506.35 H62 L69.6,498.75" fill="none" stroke="#cfcfcf" stroke-width="0.85"/><path d="M41.3,508.60 H62 L69.6,501.00" fill="none" stroke="#cfcfcf" stroke-width="0.85"/><path d="M41.3,510.85 H62 L69.6,503.25" fill="none" stroke="#cfcfcf" stroke-width="0.85"/><path d="M41.3,513.10 H62 L69.6,505.50" fill="none" stroke="#cfcfcf" stroke-width="0.85"/><polygon points="41.3,493.3 50.3,485.7 69.6,485.7 62,493.3" fill="#232323" stroke="#e8e8e8" stroke-width="0.6"/></svg>
<div style="position:absolute;left:545.00px;top:27.00px;width:50.00px;height:491.00px;background:#ebebeb"></div>
<div style="position:absolute;left:569.10px;top:33.50px;width:1.60px;height:470.50px;background:#f4a679"></div>
<svg style="position:absolute;left:0;top:0" width="800" height="553"><path d="M566,33.8 A4,4.3 0 0 1 574,33.8 Z" fill="#f0901f"/><path d="M566,503.8 A4,4 0 0 0 574,503.8 Z" fill="#f0901f"/><circle cx="569.6" cy="513.3" r="2.6" fill="none" stroke="#7a7a7a" stroke-width="0.9"/><rect x="568.3" y="512.2" width="2.6" height="2" fill="#7a7a7a"/></svg>
<div class="t" style="left:550.00px;top:31.35px;font-size:4.2px;color:#555;font-weight:normal;">50.00</div>
<div class="t" style="left:550.00px;top:35.55px;font-size:4.2px;color:#555;font-weight:normal;">(250)</div>
<div class="t" style="left:578.60px;top:499.55px;font-size:4.2px;color:#555;font-weight:normal;">0.30</div>
<div class="t" style="left:578.60px;top:504.05px;font-size:4.2px;color:#555;font-weight:normal;">(1)</div>
<div class="t" style="left:5.20px;top:525.80px;font-size:5.9px;color:#333;font-weight:normal;">Zobrazení</div>
<div style="position:absolute;left:35.20px;top:522.80px;width:58.50px;height:9.40px;background:#fff;border-radius:1.5px;box-shadow:0 0 0 0.4px #c8c8c8"></div>
<div style="position:absolute;left:86.20px;top:522.80px;width:7.50px;height:9.40px;background:linear-gradient(#63a5fa,#2d6ff0);border-radius:1.5px"></div>
<div class="t" style="left:39.00px;top:525.80px;font-size:5.9px;color:#333;font-weight:normal;">Typ</div>
<svg style="position:absolute;left:0;top:0" width="800" height="553"><path d="M88.6,526.5 L90,525 L91.4,526.5 M88.6,528.6 L90,530.1 L91.4,528.6" stroke="#fff" stroke-width="0.7" fill="none"/></svg>
<div class="t" style="left:103.50px;top:526.10px;font-size:5.9px;color:#333;font-weight:normal;">Zobrazit</div>
<div style="position:absolute;left:128.80px;top:522.60px;width:62.60px;height:10.30px;background:#fff;box-shadow:0 0 0 0.5px #c6c6c6"></div>
<div class="t" style="left:131.50px;top:526.10px;font-size:5.9px;color:#333;font-weight:normal;">Typy extruzí</div>
<div style="position:absolute;left:194.10px;top:523.40px;width:9.00px;height:8.90px;background:#fff;border-radius:1.5px;box-shadow:0 0.3px 0.6px #bdbdbd"></div>
<svg style="position:absolute;left:0;top:0" width="800" height="553"><path d="M197.3,527.2 L198.6,528.6 L199.9,527.2" stroke="#333" stroke-width="0.7" fill="none"/></svg>
<div style="position:absolute;left:221.00px;top:524.80px;width:6.30px;height:6.50px;background:#fff;border-radius:1.2px;box-shadow:0 0 0 0.4px #bcbcbc"></div>
<div class="t" style="left:229.80px;top:526.12px;font-size:5.85px;color:#333;font-weight:normal;">Rychloposun</div>
<div style="position:absolute;left:276.30px;top:524.80px;width:6.30px;height:6.50px;background:#fff;border-radius:1.2px;box-shadow:0 0 0 0.4px #bcbcbc"></div>
<div class="t" style="left:285.00px;top:526.12px;font-size:5.85px;color:#333;font-weight:normal;">Retrakce</div>
<div style="position:absolute;left:320.90px;top:524.80px;width:6.30px;height:6.50px;background:#fff;border-radius:1.2px;box-shadow:0 0 0 0.4px #bcbcbc"></div>
<div class="t" style="left:330.00px;top:526.12px;font-size:5.85px;color:#333;font-weight:normal;">Deretrakce</div>
<div style="position:absolute;left:371.50px;top:524.80px;width:6.30px;height:6.50px;background:#fff;border-radius:1.2px;box-shadow:0 0 0 0.4px #bcbcbc"></div>
<div class="t" style="left:380.40px;top:526.12px;font-size:5.85px;color:#333;font-weight:normal;">Skořápky</div>
<div style="position:absolute;left:422.20px;top:524.80px;width:6.50px;height:6.50px;background:#2f7bf5;border-radius:1.2px"></div>
<svg style="position:absolute;left:0;top:0" width="800" height="553"><path d="M423.59999999999997,528.2 L424.9,529.7 L427.3,526.2" stroke="#fff" stroke-width="0.9" fill="none"/></svg>
<div class="t" style="left:431.00px;top:526.12px;font-size:5.85px;color:#333;font-weight:normal;">Legenda</div>
<div style="position:absolute;left:0.00px;top:543.70px;width:800.00px;height:9.30px;background:#e9e9e9;border-top:0.5px solid #d2d2d2"></div>
<div class="t" style="left:1.90px;top:547.92px;font-size:5.5px;color:#444;font-weight:normal;">Slicování dokončeno...</div>
<div style="position:absolute;left:638.30px;top:28.60px;width:42.70px;height:8.90px;background:#fff;border-radius:2px;box-shadow:0 0.3px 0.8px rgba(0,0,0,0.25);"></div>
<div style="position:absolute;left:640.30px;top:31.50px;width:3.50px;height:3.50px;background:#97c73e"></div>
<div class="t" style="left:645.30px;top:31.20px;font-size:5.9px;color:#b8b8b8;font-weight:normal;">Jednoduchý</div>
<div style="position:absolute;left:684.80px;top:28.60px;width:35.40px;height:8.90px;background:#fff;border-radius:2px;box-shadow:0 0.3px 0.8px rgba(0,0,0,0.25);"></div>
<div style="position:absolute;left:686.80px;top:31.50px;width:3.50px;height:3.50px;background:#f3c943"></div>
<div class="t" style="left:691.80px;top:31.20px;font-size:5.9px;color:#b8b8b8;font-weight:normal;">Pokročilý</div>
<div style="position:absolute;left:723.50px;top:28.60px;width:29.50px;height:8.90px;background:#fff;border-radius:2px;box-shadow:0 0.3px 0.8px rgba(0,0,0,0.25);"></div>
<div style="position:absolute;left:725.50px;top:31.50px;width:3.50px;height:3.50px;background:#b4201e"></div>
<div class="t" style="left:731.00px;top:31.20px;font-size:5.9px;color:#111;font-weight:bold;">Expert</div>
<div class="t" style="left:598.70px;top:41.50px;font-size:5.9px;color:#333;font-weight:normal;">Nastavení tisku :</div>
<div style="position:absolute;left:597.60px;top:48.50px;width:172.80px;height:10.90px;background:#fff;box-shadow:0 0 0 0.5px #c9c9c9"></div>
<svg style="position:absolute;left:0;top:0" width="800" height="553"><polygon points="609.38,53.76 609.38,54.44 608.58,54.91 608.37,55.42 608.61,56.32 608.12,56.81 607.22,56.57 606.71,56.78 606.24,57.58 605.56,57.58 605.09,56.78 604.58,56.57 603.68,56.81 603.19,56.32 603.43,55.42 603.22,54.91 602.42,54.44 602.42,53.76 603.22,53.29 603.43,52.78 603.19,51.88 603.68,51.39 604.58,51.63 605.09,51.42 605.56,50.62 606.24,50.62 606.71,51.42 607.22,51.63 608.12,51.39 608.61,51.88 608.37,52.78 608.58,53.29" fill="#8e8e8e"/><circle cx="605.9" cy="54.1" r="2.03" fill="#efc4aa"/><circle cx="605.9" cy="54.1" r="0.95" fill="#fbfbfb"/></svg>
<div class="t" style="left:624.00px;top:52.21px;font-size:5.7px;color:#333;font-weight:normal;">0.20mm REBEL</div>
<div style="position:absolute;left:773.00px;top:49.40px;width:9.20px;height:9.60px;background:#fff;border-radius:2px;box-shadow:0 0.3px 0.8px rgba(0,0,0,0.25);"></div>
<svg style="position:absolute;left:0;top:0" width="800" height="553"><path d="M775.50,53.20 L777.60,55.20 L779.70,53.20" stroke="#444" stroke-width="0.9" fill="none"/></svg>
<svg style="position:absolute;left:0;top:0" width="800" height="553"><polygon points="792.38,53.86 792.38,54.54 791.58,55.01 791.37,55.52 791.61,56.42 791.12,56.91 790.22,56.67 789.71,56.88 789.24,57.68 788.56,57.68 788.09,56.88 787.58,56.67 786.68,56.91 786.19,56.42 786.43,55.52 786.22,55.01 785.42,54.54 785.42,53.86 786.22,53.39 786.43,52.88 786.19,51.98 786.68,51.49 787.58,51.73 788.09,51.52 788.56,50.72 789.24,50.72 789.71,51.52 790.22,51.73 791.12,51.49 791.61,51.98 791.37,52.88 791.58,53.39" fill="#8e8e8e"/><circle cx="788.9" cy="54.2" r="2.03" fill="#efc4aa"/><circle cx="788.9" cy="54.2" r="0.95" fill="#fbfbfb"/></svg>
<div class="t" style="left:598.70px;top:64.60px;font-size:5.9px;color:#333;font-weight:normal;">Filament :</div>
<div style="position:absolute;left:597.60px;top:71.60px;width:172.80px;height:10.80px;background:#fff;box-shadow:0 0 0 0.5px #c9c9c9"></div>
<div style="position:absolute;left:600.00px;top:73.00px;width:8.00px;height:8.00px;background:#8d8a25"></div>
<div style="position:absolute;left:608.00px;top:73.00px;width:4.30px;height:8.00px;background:#e83be8"></div>
<div class="t" style="left:624.00px;top:75.10px;font-size:5.9px;color:#333;font-weight:normal;">Rebel PLA</div>
<div style="position:absolute;left:773.00px;top:72.40px;width:9.20px;height:9.60px;background:#fff;border-radius:2px;box-shadow:0 0.3px 0.8px rgba(0,0,0,0.25);"></div>
<svg style="position:absolute;left:0;top:0" width="800" height="553"><path d="M775.50,76.20 L777.60,78.20 L779.70,76.20" stroke="#444" stroke-width="0.9" fill="none"/></svg>
<svg style="position:absolute;left:0;top:0" width="800" height="553"><polygon points="792.38,76.86 792.38,77.54 791.58,78.01 791.37,78.52 791.61,79.42 791.12,79.91 790.22,79.67 789.71,79.88 789.24,80.68 788.56,80.68 788.09,79.88 787.58,79.67 786.68,79.91 786.19,79.42 786.43,78.52 786.22,78.01 785.42,77.54 785.42,76.86 786.22,76.39 786.43,75.88 786.19,74.98 786.68,74.49 787.58,74.73 788.09,74.52 788.56,73.72 789.24,73.72 789.71,74.52 790.22,74.73 791.12,74.49 791.61,74.98 791.37,75.88 791.58,76.39" fill="#8e8e8e"/><circle cx="788.9" cy="77.2" r="2.03" fill="#efc4aa"/><circle cx="788.9" cy="77.2" r="0.95" fill="#fbfbfb"/></svg>
<div class="t" style="left:598.70px;top:87.10px;font-size:5.9px;color:#333;font-weight:normal;">Tiskárna :</div>
<div style="position:absolute;left:597.60px;top:94.00px;width:172.80px;height:10.50px;background:#fff;box-shadow:0 0 0 0.5px #c9c9c9"></div>
<div style="position:absolute;left:602.00px;top:96.50px;width:8.00px;height:6.50px;background:#fafafa;box-shadow:0 0 0 0.5px #9a9a9a"></div>
<div style="position:absolute;left:603.20px;top:98.20px;width:1.80px;height:1.40px;background:#f07020"></div>
<div class="t" style="left:624.00px;top:97.60px;font-size:5.9px;color:#333;font-weight:normal;">Rebel II 0.4 PS2 (upraveno)</div>
<div style="position:absolute;left:773.00px;top:95.00px;width:9.20px;height:9.30px;background:#fff;border-radius:2px;box-shadow:0 0.3px 0.8px rgba(0,0,0,0.25);"></div>
<svg style="position:absolute;left:0;top:0" width="800" height="553"><path d="M775.50,98.65 L777.60,100.65 L779.70,98.65" stroke="#444" stroke-width="0.9" fill="none"/></svg>
<svg style="position:absolute;left:0;top:0" width="800" height="553"><polygon points="792.38,99.26 792.38,99.94 791.58,100.41 791.37,100.92 791.61,101.82 791.12,102.31 790.22,102.07 789.71,102.28 789.24,103.08 788.56,103.08 788.09,102.28 787.58,102.07 786.68,102.31 786.19,101.82 786.43,100.92 786.22,100.41 785.42,99.94 785.42,99.26 786.22,98.79 786.43,98.28 786.19,97.38 786.68,96.89 787.58,97.13 788.09,96.92 788.56,96.12 789.24,96.12 789.71,96.92 790.22,97.13 791.12,96.89 791.61,97.38 791.37,98.28 791.58,98.79" fill="#8e8e8e"/><circle cx="788.9" cy="99.6" r="2.03" fill="#efc4aa"/><circle cx="788.9" cy="99.6" r="0.95" fill="#fbfbfb"/></svg>
<div class="t" style="left:598.90px;top:113.10px;font-size:5.9px;color:#333;font-weight:normal;">Podpěry:</div>
<div style="position:absolute;left:626.50px;top:110.50px;width:143.90px;height:9.80px;background:#fff;box-shadow:0 0 0 0.5px #c9c9c9"></div>
<div class="t" style="left:628.50px;top:113.26px;font-size:5.6px;color:#333;font-weight:normal;">Žádné</div>
<div style="position:absolute;left:773.00px;top:110.80px;width:9.20px;height:9.20px;background:#fff;border-radius:2px;box-shadow:0 0.3px 0.8px rgba(0,0,0,0.25);"></div>
<svg style="position:absolute;left:0;top:0" width="800" height="553"><path d="M775.50,114.40 L777.60,116.40 L779.70,114.40" stroke="#444" stroke-width="0.9" fill="none"/></svg>
<div class="t" style="left:599.00px;top:129.20px;font-size:5.9px;color:#333;font-weight:normal;">Výplň:</div>
<div style="position:absolute;left:618.60px;top:125.90px;width:21.70px;height:10.20px;background:#fff;box-shadow:0 0 0 0.5px #c9c9c9"></div>
<div class="t" style="left:621.00px;top:129.31px;font-size:5.7px;color:#333;font-weight:normal;">15%</div>
<div style="position:absolute;left:642.90px;top:126.50px;width:9.20px;height:9.00px;background:#fff;border-radius:2px;box-shadow:0 0.3px 0.8px rgba(0,0,0,0.25);"></div>
<svg style="position:absolute;left:0;top:0" width="800" height="553"><path d="M645.40,130.00 L647.50,132.00 L649.60,130.00" stroke="#444" stroke-width="0.9" fill="none"/></svg>
<div class="t" style="left:666.90px;top:129.20px;font-size:5.9px;color:#333;font-weight:normal;">Límec:</div>
<div style="position:absolute;left:687.90px;top:127.60px;width:6.40px;height:6.80px;background:#fff;border-radius:1.2px;box-shadow:0 0 0 0.4px #bcbcbc"></div>
<div style="position:absolute;left:597.40px;top:138.60px;width:199.60px;height:167.60px;background:#fff"></div>
<div style="position:absolute;left:597.40px;top:146.40px;width:199.60px;height:0.50px;background:#ececec"></div>
<div style="position:absolute;left:699.60px;top:139.50px;width:0.50px;height:6.30px;background:#e4e4e4"></div>
<div style="position:absolute;left:711.30px;top:139.50px;width:0.50px;height:6.30px;background:#e4e4e4"></div>
<div class="t" style="left:598.50px;top:141.09px;font-size:5.2px;color:#444;font-weight:normal;">Název</div>
<div class="t" style="left:654.00px;width:200px;text-align:center;top:140.75px;font-size:5.8px;color:#444;font-weight:normal;">Editace</div>
<div style="position:absolute;left:597.40px;top:146.90px;width:199.60px;height:10.10px;background:#dcdcdc"></div>
<div class="t" style="left:606.00px;top:149.76px;font-size:6.85px;color:#2a2a2a;font-weight:normal;">ben_floating_benchmark.stl</div>
<svg style="position:absolute;left:0;top:0" width="800" height="553"><path d="M701.8,152.6 Q705.4,149.3 709,152.6 Q705.4,155.9 701.8,152.6 Z" fill="none" stroke="#666" stroke-width="0.6"/><circle cx="705.4" cy="152.6" r="1.1" fill="#666"/><rect x="750.3" y="151" width="5" height="5" fill="none" stroke="#777" stroke-width="0.5"/><circle cx="755.3" cy="150.8" r="1.6" fill="#f0823c"/><rect x="754.3" y="150.6" width="2" height="0.5" fill="#fff"/></svg>
<div class="t" style="left:607.30px;top:310.60px;font-size:5.9px;color:#333;font-weight:normal;">Manipulace s objektem</div>
<div style="position:absolute;left:599.00px;top:315.80px;width:195.70px;height:76.90px;background:#dadada;border-radius:3px"></div>
<div style="position:absolute;left:605.00px;top:324.00px;width:61.00px;height:9.50px;background:#fff;box-shadow:0 0 0 0.5px #c9c9c9"></div>
<div class="t" style="left:607.00px;top:326.90px;font-size:5.9px;color:#333;font-weight:normal;">Světové souřadnice</div>
<div style="position:absolute;left:669.00px;top:324.00px;width:9.50px;height:9.50px;background:#fff;border-radius:2px;box-shadow:0 0.3px 0.8px rgba(0,0,0,0.25);"></div>
<svg style="position:absolute;left:0;top:0" width="800" height="553"><path d="M671.65,327.75 L673.75,329.75 L675.85,327.75" stroke="#444" stroke-width="0.9" fill="none"/></svg>
<div class="t" style="left:590.20px;width:200px;text-align:center;top:327.26px;font-size:5.6px;color:#222;font-weight:bold;">X</div>
<div class="t" style="left:619.00px;width:200px;text-align:center;top:327.26px;font-size:5.6px;color:#222;font-weight:bold;">Y</div>
<div class="t" style="left:647.80px;width:200px;text-align:center;top:327.26px;font-size:5.6px;color:#222;font-weight:bold;">Z</div>
<div style="position:absolute;left:683.75px;top:339.40px;width:24.25px;height:9.80px;background:#fff;box-shadow:0 0 0 0.5px #c9c9c9"></div>
<div class="t" style="left:685.55px;top:342.51px;font-size:5.7px;color:#333;font-weight:normal;">100</div>
<div style="position:absolute;left:711.80px;top:339.40px;width:24.40px;height:9.80px;background:#fff;box-shadow:0 0 0 0.5px #c9c9c9"></div>
<div class="t" style="left:713.60px;top:342.51px;font-size:5.7px;color:#333;font-weight:normal;">100</div>
<div style="position:absolute;left:740.00px;top:339.40px;width:24.30px;height:9.80px;background:#fff;box-shadow:0 0 0 0.5px #c9c9c9"></div>
<div class="t" style="left:741.80px;top:342.51px;font-size:5.7px;color:#333;font-weight:normal;">25</div>
<div class="t" style="left:767.70px;top:343.06px;font-size:5.6px;color:#444;font-weight:normal;">mm</div>
<div style="position:absolute;left:683.75px;top:353.00px;width:24.25px;height:10.00px;background:#fff;box-shadow:0 0 0 0.5px #c9c9c9"></div>
<div class="t" style="left:685.55px;top:356.21px;font-size:5.7px;color:#333;font-weight:normal;">0</div>
<div style="position:absolute;left:711.80px;top:353.00px;width:24.40px;height:10.00px;background:#fff;box-shadow:0 0 0 0.5px #c9c9c9"></div>
<div class="t" style="left:713.60px;top:356.21px;font-size:5.7px;color:#333;font-weight:normal;">0</div>
<div style="position:absolute;left:740.00px;top:353.00px;width:24.30px;height:10.00px;background:#fff;box-shadow:0 0 0 0.5px #c9c9c9"></div>
<div class="t" style="left:741.80px;top:356.21px;font-size:5.7px;color:#333;font-weight:normal;">0</div>
<div class="t" style="left:767.70px;top:356.76px;font-size:5.6px;color:#444;font-weight:normal;">°</div>
<div style="position:absolute;left:683.75px;top:366.70px;width:24.25px;height:9.80px;background:#fff;box-shadow:0 0 0 0.5px #c9c9c9"></div>
<div class="t" style="left:685.55px;top:369.81px;font-size:5.7px;color:#333;font-weight:normal;">100</div>
<div style="position:absolute;left:711.80px;top:366.70px;width:24.40px;height:9.80px;background:#fff;box-shadow:0 0 0 0.5px #c9c9c9"></div>
<div class="t" style="left:713.60px;top:369.81px;font-size:5.7px;color:#333;font-weight:normal;">100</div>
<div style="position:absolute;left:740.00px;top:366.70px;width:24.30px;height:9.80px;background:#fff;box-shadow:0 0 0 0.5px #c9c9c9"></div>
<div class="t" style="left:741.80px;top:369.81px;font-size:5.7px;color:#333;font-weight:normal;">100</div>
<div class="t" style="left:767.70px;top:370.36px;font-size:5.6px;color:#444;font-weight:normal;">%</div>
<div style="position:absolute;left:683.75px;top:380.00px;width:24.25px;height:10.00px;background:#fff;box-shadow:0 0 0 0.5px #c9c9c9"></div>
<div class="t" style="left:685.55px;top:383.21px;font-size:5.7px;color:#333;font-weight:normal;">35</div>
<div style="position:absolute;left:711.80px;top:380.00px;width:24.40px;height:10.00px;background:#fff;box-shadow:0 0 0 0.5px #c9c9c9"></div>
<div class="t" style="left:713.60px;top:383.21px;font-size:5.7px;color:#333;font-weight:normal;">60</div>
<div style="position:absolute;left:740.00px;top:380.00px;width:24.30px;height:10.00px;background:#fff;box-shadow:0 0 0 0.5px #c9c9c9"></div>
<div class="t" style="left:741.80px;top:383.21px;font-size:5.7px;color:#333;font-weight:normal;">50</div>
<div class="t" style="left:767.70px;top:383.76px;font-size:5.6px;color:#444;font-weight:normal;">mm</div>
<div class="t" style="left:605.00px;top:342.50px;font-size:5.9px;color:#333;font-weight:normal;">Pozice:</div>
<div class="t" style="left:605.00px;top:356.10px;font-size:5.9px;color:#333;font-weight:normal;">Otočit:</div>
<div class="t" style="left:619.00px;top:369.90px;font-size:5.9px;color:#333;font-weight:normal;">Měřítka:</div>
<div class="t" style="left:617.00px;top:383.00px;font-size:5.9px;color:#333;font-weight:normal;">Rozměr:</div>
<svg style="position:absolute;left:0;top:0" width="800" height="553"><path d="M606.2,370.2 V368.4 A1.9,1.9 0 0 1 610,368.4 V370.2" fill="none" stroke="#8a8a8a" stroke-width="0.7"/><rect x="605.4" y="370.2" width="5.4" height="4.3" fill="none" stroke="#8a8a8a" stroke-width="0.7"/></svg>
<div class="t" style="left:604.70px;top:399.10px;font-size:5.9px;color:#333;font-weight:normal;">Info</div>
<div style="position:absolute;left:598.80px;top:404.00px;width:196.20px;height:33.40px;background:#dadada;border-radius:3px"></div>
<div class="t" style="left:604.00px;top:410.40px;font-size:5.9px;color:#333;font-weight:normal;">Rozměr:</div>
<div class="t" style="left:636.00px;top:409.23px;font-size:6.2px;color:#333;font-weight:normal;">35.00 x 60.00 x 50.00</div>
<div class="t" style="left:706.50px;top:410.40px;font-size:5.9px;color:#333;font-weight:normal;">Obsah:</div>
<div class="t" style="left:743.00px;top:409.23px;font-size:6.2px;color:#333;font-weight:normal;">18854.65</div>
<div class="t" style="left:604.00px;top:420.10px;font-size:5.9px;color:#333;font-weight:normal;">Facety:</div>
<div class="t" style="left:636.00px;top:418.93px;font-size:6.2px;color:#333;font-weight:normal;">94376 (1 obalů)</div>
<div class="t" style="left:706.50px;top:420.10px;font-size:5.9px;color:#333;font-weight:normal;">Materiálů:</div>
<div class="t" style="left:743.00px;top:418.93px;font-size:6.2px;color:#333;font-weight:normal;">1</div>
<div class="t" style="left:604.00px;top:428.60px;font-size:5.9px;color:#333;font-weight:normal;">Model OK:</div>
<div class="t" style="left:636.00px;top:427.43px;font-size:6.2px;color:#333;font-weight:normal;">Ano</div>
<div class="t" style="left:604.70px;top:444.10px;font-size:5.9px;color:#333;font-weight:normal;">Informace o slicování</div>
<div style="position:absolute;left:598.80px;top:449.00px;width:196.20px;height:59.80px;background:#dadada;border-radius:3px"></div>
<div class="t" style="left:604.00px;top:455.20px;font-size:5.9px;color:#333;font-weight:normal;white-space:pre">Použito Filamentu (m)</div>
<div class="t" style="left:679.60px;top:454.03px;font-size:6.2px;color:#333;font-weight:normal;">4.64</div>
<div class="t" style="left:604.00px;top:464.70px;font-size:5.9px;color:#333;font-weight:normal;white-space:pre">Použito Filamentu (mm³)</div>
<div class="t" style="left:679.60px;top:463.53px;font-size:6.2px;color:#333;font-weight:normal;">11171.01</div>
<div class="t" style="left:604.00px;top:474.40px;font-size:5.9px;color:#333;font-weight:normal;white-space:pre">Použito Filamentu (g)</div>
<div class="t" style="left:679.60px;top:473.23px;font-size:6.2px;color:#333;font-weight:normal;">13.96</div>
<div class="t" style="left:604.00px;top:483.90px;font-size:5.9px;color:#333;font-weight:normal;white-space:pre">Náklady</div>
<div class="t" style="left:679.60px;top:482.73px;font-size:6.2px;color:#333;font-weight:normal;">16.76</div>
<div class="t" style="left:604.00px;top:493.90px;font-size:5.9px;color:#333;font-weight:normal;white-space:pre">Odhadovaný čas tisku :</div>
<div class="t" style="left:610.60px;top:500.80px;font-size:5.9px;color:#333;font-weight:normal;white-space:pre">- normální režim</div>
<div class="t" style="left:679.60px;top:499.63px;font-size:6.2px;color:#333;font-weight:normal;">1h 33m 14s</div>
<div style="position:absolute;left:598.00px;top:514.00px;width:198.30px;height:9.50px;background:#fff;border-radius:2px;box-shadow:0 0.3px 0.8px rgba(0,0,0,0.25);"></div>
<div class="t" style="left:597.00px;width:200px;text-align:center;top:516.90px;font-size:5.9px;color:#111;font-weight:bold;">Odeslat G-code</div>
<div style="position:absolute;left:598.00px;top:527.30px;width:198.30px;height:9.50px;background:#fff;border-radius:2px;box-shadow:0 0.3px 0.8px rgba(0,0,0,0.25);"></div>
<div class="t" style="left:597.00px;width:200px;text-align:center;top:530.20px;font-size:5.9px;color:#111;font-weight:bold;">Exportovat G-code</div>
</body></html>
